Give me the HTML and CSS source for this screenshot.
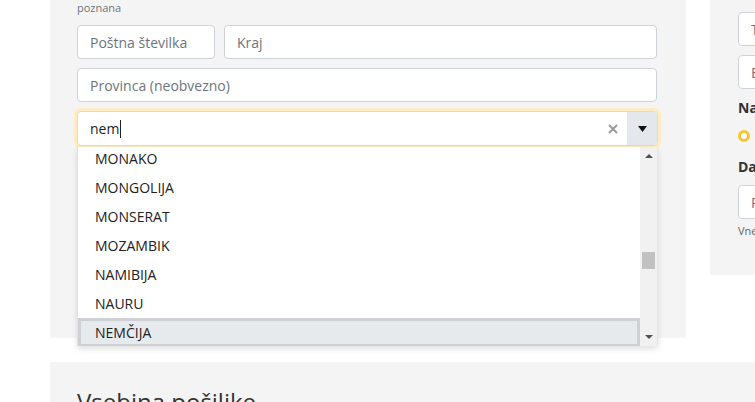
FILE: index.html
```html
<!DOCTYPE html>
<html lang="sl">
<head>
    <meta charset="UTF-8">
    <meta name="viewport" content="width=device-width, initial-scale=1.0">
    <title>Naslov za dostavo</title>
    <link rel="stylesheet" href="styles.css">
</head>
<body>

<div class="page">
    <div class="row">
        <section class="panel main">
            <p class="hint">poznana</p>

            <div class="line">
                <input type="text" class="field zip" placeholder="Poštna številka">
                <input type="text" class="field city" placeholder="Kraj">
            </div>

            <input type="text" class="field" placeholder="Provinca (neobvezno)">

            <div class="combo">
                <div class="combo-box">
                    <span class="combo-value">nem</span><span class="caret"></span>
                    <span class="combo-clear">
                        <svg width="10" height="10" viewBox="0 0 10 10"><path d="M1 1L9 9M9 1L1 9" stroke="#9a9a9a" stroke-width="2"/></svg>
                    </span>
                    <span class="combo-toggle">
                        <svg width="9" height="6" viewBox="0 0 9 6"><path d="M0 0H9L4.5 6Z" fill="#111"/></svg>
                    </span>
                </div>

                <div class="combo-list">
                    <ul class="options">
                        <li>MONAKO</li>
                        <li>MONGOLIJA</li>
                        <li>MONSERAT</li>
                        <li>MOZAMBIK</li>
                        <li>NAMIBIJA</li>
                        <li>NAURU</li>
                        <li class="active">NEMČIJA</li>
                    </ul>
                    <div class="scrollbar">
                        <span class="arrow up"></span>
                        <span class="track"><span class="thumb"></span></span>
                        <span class="arrow down"></span>
                    </div>
                </div>
            </div>
        </section>

        <aside class="panel side">
            <input type="text" class="field" placeholder="Telefonska številka">
            <input type="text" class="field" placeholder="E-poštni naslov">
            <h4 class="label">Način plačila</h4>
            <div class="radio-row"><span class="radio"></span> Po povzetju</div>
            <h4 class="label">Datum prevzema</h4>
            <input type="text" class="field" placeholder="Prevzem">
            <p class="note">Vnesite želeni datum prevzema</p>
        </aside>
    </div>

    <section class="panel contents">
        <h2>Vsebina pošiljke</h2>
    </section>
</div>

</body>
</html>
```

FILE: styles.css
```css
body {
    margin: 0;
    background: #fff;
    font-family: "Open Sans", "Noto Sans", sans-serif;
    color: #222;
    overflow: hidden;
}
.page {
    width: 1100px;
    padding-left: 50px;
}
.row {
    display: flex;
    align-items: flex-start;
    gap: 24px;
}
.panel {
    background: #f4f4f4;
}
.main {
    width: 636px;
    height: 338px;
    box-sizing: border-box;
    padding: 0 29px 0 27px;
    display: flex;
    flex-direction: column;
    gap: 9px;
}
.hint {
    margin: 0;
    font-size: 11px;
    line-height: 16px;
    color: #6c757d;
}
.line {
    display: flex;
    gap: 9px;
}
.field {
    display: block;
    box-sizing: border-box;
    width: 100%;
    height: 34px;
    margin: 0;
    padding: 0 12px;
    border: 1px solid #ced3d9;
    border-radius: 4px;
    background: #fff;
    font-family: inherit;
    font-size: 14px;
    color: #222;
}
.field::placeholder {
    color: #6c757d;
}
.zip {
    width: 138px;
    flex: none;
}
.city {
    flex: 1;
}

/* izbirnik drzave */
.combo {
    position: relative;
    width: 581px;
}
.combo-box {
    display: flex;
    align-items: center;
    height: 35px;
    box-sizing: border-box;
    border: 1px solid #f4dc97;
    border-radius: 4px;
    background: #fff;
    box-shadow: 0 0 0 3px #fbecc3;
    padding-left: 12px;
    font-size: 14px;
    overflow: hidden;
}
.combo-value {
    color: #222;
}
.caret {
    width: 1px;
    height: 18px;
    background: #222;
    margin-left: 1px;
}
.combo-clear {
    margin-left: auto;
    width: 28px;
    display: flex;
    justify-content: center;
}
.combo-toggle {
    width: 30px;
    height: 100%;
    background: #e4e7eb;
    display: flex;
    align-items: center;
    justify-content: center;
}
.combo-list {
    position: absolute;
    left: 0;
    top: 36px;
    width: 581px;
    height: 199px;
    display: flex;
    background: #fff;
    border-left: 1px solid #e2e2e2;
    box-sizing: border-box;
    box-shadow: 0 3px 6px rgba(0, 0, 0, 0.12);
    overflow: hidden;
    z-index: 2;
}
.options {
    flex: 1;
    margin: -3px 0 0;
    padding: 0;
    list-style: none;
}
.options li {
    height: 29px;
    box-sizing: border-box;
    border: 3px solid transparent;
    padding-left: 14px;
    line-height: 23px;
    font-size: 14px;
    color: #222;
}
.options li.active {
    background: #e7eaed;
    border-color: #cdd1d5;
}
.scrollbar {
    width: 17px;
    background: #f1f1f1;
    border-right: 1px solid #e6e6e6;
    display: flex;
    flex-direction: column;
    align-items: center;
}
.arrow {
    width: 0;
    height: 0;
    border-left: 4px solid transparent;
    border-right: 4px solid transparent;
}
.arrow.up {
    margin-top: 7px;
    border-bottom: 4px solid #505050;
}
.arrow.down {
    margin-bottom: 7px;
    border-top: 4px solid #505050;
}
.track {
    flex: 1;
    width: 13px;
    position: relative;
}
.thumb {
    position: absolute;
    left: 0;
    top: 94px;
    width: 13px;
    height: 17px;
    background: #c1c1c1;
}

/* desni stolpec */
.side {
    width: 300px;
    height: 275px;
    box-sizing: border-box;
    padding: 12px 0 0 28px;
}
.side .field {
    width: 260px;
    margin-bottom: 9px;
}
.label {
    margin: 0;
    font-size: 14px;
    line-height: 20px;
    font-weight: 700;
    color: #333;
}
.radio-row {
    display: flex;
    align-items: center;
    gap: 8px;
    height: 20px;
    margin: 8px 0 11px;
    font-size: 14px;
}
.radio {
    width: 6px;
    height: 6px;
    border: 3px solid #f8c62c;
    border-radius: 50%;
    background: #fff;
}
.label + .field {
    margin-top: 8px;
}
.side .field:last-of-type {
    margin-bottom: 0;
}
.note {
    margin: 4px 0 0;
    font-size: 11px;
    line-height: 16px;
    color: #666;
}

/* vsebina */
.contents {
    margin-top: 24px;
    height: 200px;
    padding: 26px 27px 0;
}
.contents h2 {
    margin: 0;
    font-size: 24px;
    line-height: 1.2;
    font-weight: 400;
    color: #333;
}
```
